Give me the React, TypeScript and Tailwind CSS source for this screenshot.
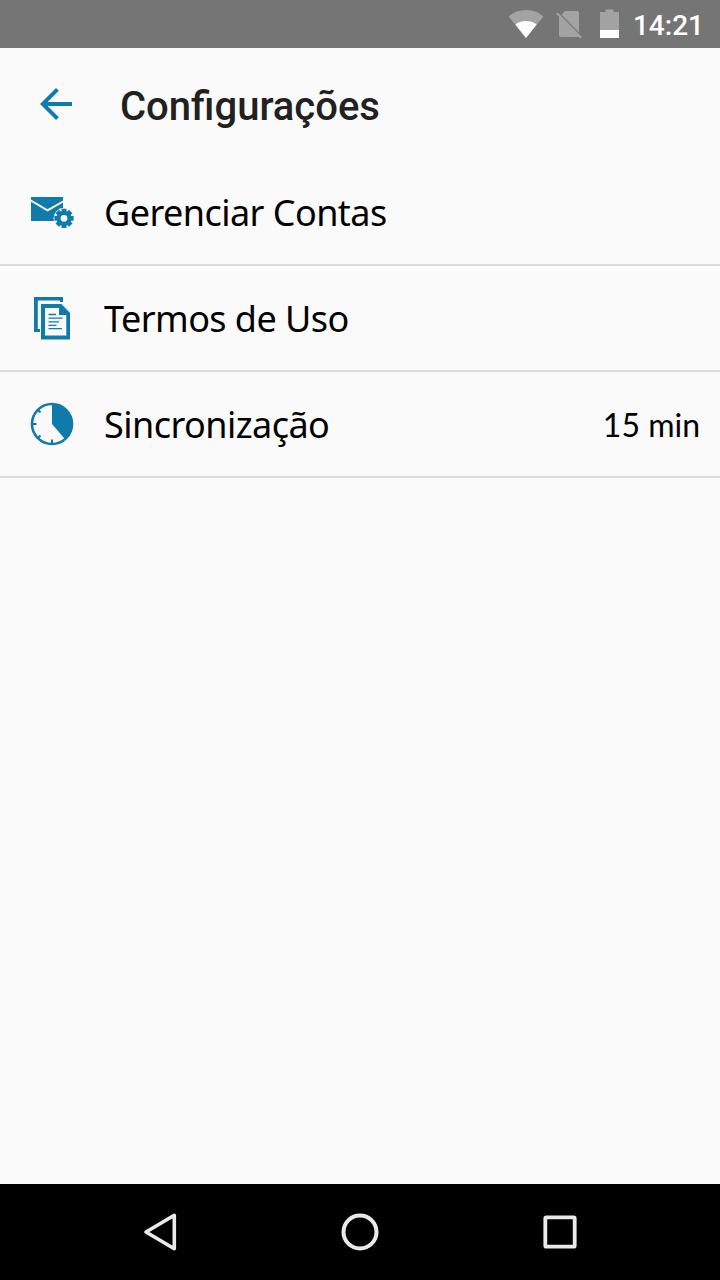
import type { ReactNode } from 'react';

const accent = '#107bab';

function StatusBar() {
  return (
    <header className="flex h-12 shrink-0 items-center justify-end bg-[#757575] pr-4 text-white">
      <svg className="h-12 w-[120px]" viewBox="506 0 120 48" fill="none">
        <path d="M526 38 508.7 16.4Q516 10 526 10T543.3 16.4Z" fill="#a3a3a3" />
        <path d="M526 38 515.3 24.6Q519.5 21 526 21T536.7 24.6Z" fill="#fff" />
        <path d="M565 11h12q2 0 2 2v19.5L561.5 14.7ZM559 15.5l20 20.5q0 1-2 1H561q-2 0-2-2Z" fill="#a3a3a3" />
        <path d="m557 13.2 24 24.5" stroke="#a3a3a3" strokeWidth="2.2" />
        <path d="M600 12h5.5V9.5h8V12h5.5v18h-19Z" fill="#a3a3a3" />
        <path d="M600 30h19v8h-19Z" fill="#fff" />
      </svg>
      <span className="mt-1 ml-[7px] text-[28px] leading-8 font-medium">14:21</span>
    </header>
  );
}

function MailSettingsIcon() {
  const teeth = [0, 45, 90, 135, 180, 225, 270, 315];
  return (
    <svg className="size-12" viewBox="28 188 48 48" fill="none">
      <path d="M31 197h32v24H31Z" fill={accent} />
      <path d="m30 200 17.5 10.3L64 201" stroke="#fafafa" strokeWidth="2" />
      <circle cx="64" cy="218.3" r="10.5" fill="#fafafa" />
      <circle cx="64" cy="218.3" r="5.5" stroke={accent} strokeWidth="4.2" />
      {teeth.map((angle) => (
        <path key={angle} d="M61.6 208.7h4.8v4h-4.8Z" fill={accent} transform={`rotate(${angle} 64 218.3)`} />
      ))}
    </svg>
  );
}

function DocumentsIcon() {
  return (
    <svg className="size-12" viewBox="28 294 48 48" fill="none">
      <path d="M34 297h29v5h-3v-1.5H37.8V329H40v3h-6Z" fill={accent} />
      <path d="M41 304h20.5l8.5 9v26.5H41Z" fill={accent} />
      <path d="M45 308h14v7h7.3v20.5H45Z" fill="#fafafa" />
      <path d="M48.5 314.5H56M48.5 318.2h14M48.5 321.8H59M48.5 325.3h8M48.5 328.7h13.5" stroke={accent} strokeWidth="1.3" />
    </svg>
  );
}

function ClockIcon() {
  return (
    <svg className="size-12" viewBox="28 400 48 48" fill="none">
      <circle cx="52" cy="424" r="20" stroke={accent} strokeWidth="2.6" />
      <path d="M52 404a20 20 0 0 1 13 35.2L52 424Z" fill={accent} />
      <path d="M52 439.5v4M40.5 435.5l-3 3M36.5 424H32M40.5 412.5l-3-3" stroke={accent} strokeWidth="2" />
    </svg>
  );
}

function SettingRow({ icon, children, value }: { icon: ReactNode; children: ReactNode; value?: ReactNode }) {
  return (
    <li className="flex h-[106px] items-center border-b-2 border-[#dcdcdc] pr-5 pl-7 font-['Noto_Sans',sans-serif] text-black">
      {icon}
      <span className="mt-0.5 ml-7 flex-1 text-[36px] leading-[48px] tracking-[-0.55px]">{children}</span>
      {value}
    </li>
  );
}

function NavigationBar() {
  return (
    <nav className="flex h-24 shrink-0 items-center justify-center gap-[152px] bg-black text-[#eaeaea]">
      <svg className="size-12" viewBox="136 1208 48 48" fill="none" stroke="currentColor" strokeWidth="3.6" strokeLinejoin="round">
        <path d="m146 1232 28.3-16.7v33.4Z" />
      </svg>
      <svg className="size-12" viewBox="336 1208 48 48" fill="none" stroke="currentColor" strokeWidth="4">
        <circle cx="360" cy="1232" r="16.5" />
      </svg>
      <svg className="size-12" viewBox="536 1208 48 48" fill="none" stroke="currentColor" strokeWidth="3.8">
        <rect x="545.3" y="1217.3" width="29.4" height="29.4" rx="1" />
      </svg>
    </nav>
  );
}

export default function App() {
  return (
    <div className="flex h-[1280px] w-[720px] flex-col bg-[#fafafa] font-[Roboto,sans-serif]">
      <StatusBar />
      <div className="flex h-28 shrink-0 items-center pl-8">
        <svg className="size-12" viewBox="0 0 24 24" fill={accent}>
          <path d="M20 11H7.83l5.59-5.59L12 4l-8 8 8 8 1.41-1.41L7.83 13H20v-2z" />
        </svg>
        <h1 className="mt-1.5 ml-10 text-[40px] leading-[48px] font-medium text-[#212121]">Configurações</h1>
      </div>
      <ul className="flex-1">
        <SettingRow icon={<MailSettingsIcon />}>
          <span>Gerenciar Contas</span>
        </SettingRow>
        <SettingRow icon={<DocumentsIcon />}>
          <span>Termos de Uso</span>
        </SettingRow>
        <SettingRow
          icon={<ClockIcon />}
          value={<span className="mt-px font-[Lato,sans-serif] text-[32px] leading-[48px]">15 min</span>}
        >
          <span>Sincronização</span>
        </SettingRow>
      </ul>
      <NavigationBar />
    </div>
  );
}
